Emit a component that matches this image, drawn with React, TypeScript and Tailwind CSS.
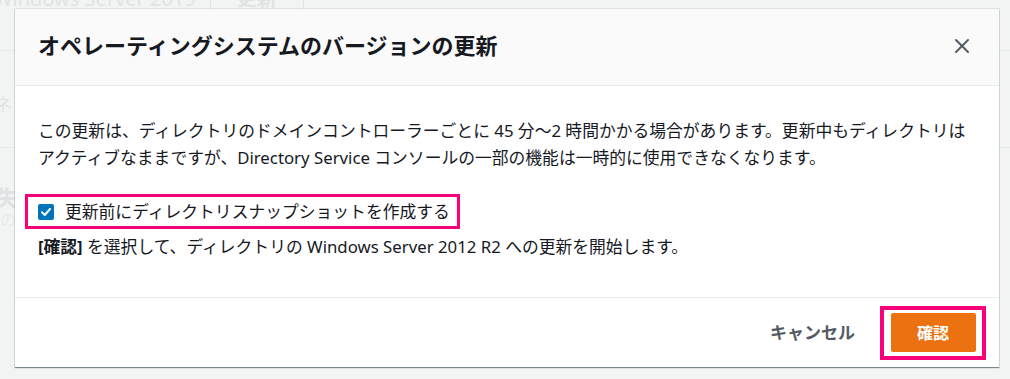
import { X } from "lucide-react";

const FONT = "font-['Noto_Sans','Noto_Sans_CJK_JP',sans-serif]";

function Backdrop() {
  return (
    <div className="flex h-full flex-col text-[#dfe3e3]">
      <div className="flex h-[9px] items-end overflow-hidden text-[20px] leading-none">
        <span className="-ml-[6px] pr-[14px]">Windows Server 2019</span>
        <span className="h-full w-px bg-[#e3e6e6]" />
        <span className="px-[26px] font-bold">更新</span>
        <span className="h-full w-px bg-[#e3e6e6]" />
      </div>
      <div className="mt-[41px] border-t border-[#e6e9e9]" />
      <div className="mt-[44px] -ml-[6px] text-[18px] leading-none">ネット</div>
      <div className="mt-[34px] border-t border-[#e6e9e9]" />
      <div className="mt-[38px] -ml-[4px] text-[22px] font-bold leading-none">失わ</div>
      <div className="mt-[4px] text-[16px] leading-none text-[#e8eaea]">の</div>
    </div>
  );
}

function Checkbox() {
  return (
    <span className="flex h-[16px] w-[16px] shrink-0 items-center justify-center rounded-[2px] bg-[#0073bb]">
      <svg width="12" height="12" viewBox="0 0 12 12" fill="none">
        <path d="M2 6.3 L4.8 9 L10 3" stroke="white" strokeWidth="2" strokeLinecap="round" strokeLinejoin="round" />
      </svg>
    </span>
  );
}

export default function App() {
  return (
    <div className={`relative h-[379px] w-[1010px] overflow-hidden bg-[#f2f3f3] ${FONT}`}>
      <Backdrop />
      <div className="absolute left-[15px] top-[9px] flex h-[358px] w-[984px] flex-col bg-white shadow-[0_1px_1px_rgba(0,28,36,0.45),0_0_0_1px_rgba(0,28,36,0.08)]">
        <div className="flex h-[77px] items-center justify-between border-b border-[#eaeded] bg-[#fafafa] pb-[3px] pl-[23px] pr-[25px]">
          <h2 className="text-[22px] font-bold text-[#16191f]">オペレーティングシステムのバージョンの更新</h2>
          <X size={24} strokeWidth={2} className="text-[#545b64]" />
        </div>
        <div className="flex flex-1 flex-col px-[23px] pt-[31px] text-[16.8px] leading-[27px] text-[#16191f]">
          <p className="whitespace-nowrap">
            この更新は、ディレクトリのドメインコントローラーごとに 45 分～2 時間かかる場合があります。更新中もディレクトリは
            <br />
            アクティブなままですが、Directory Service コンソールの一部の機能は一時的に使用できなくなります。
          </p>
          <div className="mt-[23px] -ml-[13px] flex h-[35px] w-[435px] items-center gap-[11px] border-[3px] border-[#f8007a] pl-[10px]">
            <Checkbox />
            <span>更新前にディレクトリスナップショットを作成する</span>
          </div>
          <p className="mt-[4px]">
            <b>[確認]</b> を選択して、ディレクトリの Windows Server 2012 R2 への更新を開始します。
          </p>
        </div>
        <div className="flex h-[70px] items-center justify-end border-t border-[#eaeded] pr-[13px]">
          <button className="mr-[25px] text-[17px] font-bold text-[#545b64]">キャンセル</button>
          <div className="flex h-[54px] w-[106px] items-center justify-center border-[4px] border-[#f8007a]">
            <button className="h-[39px] w-[85px] rounded-[2px] bg-[#ec7211] text-[16px] font-bold text-white">確認</button>
          </div>
        </div>
      </div>
    </div>
  );
}
